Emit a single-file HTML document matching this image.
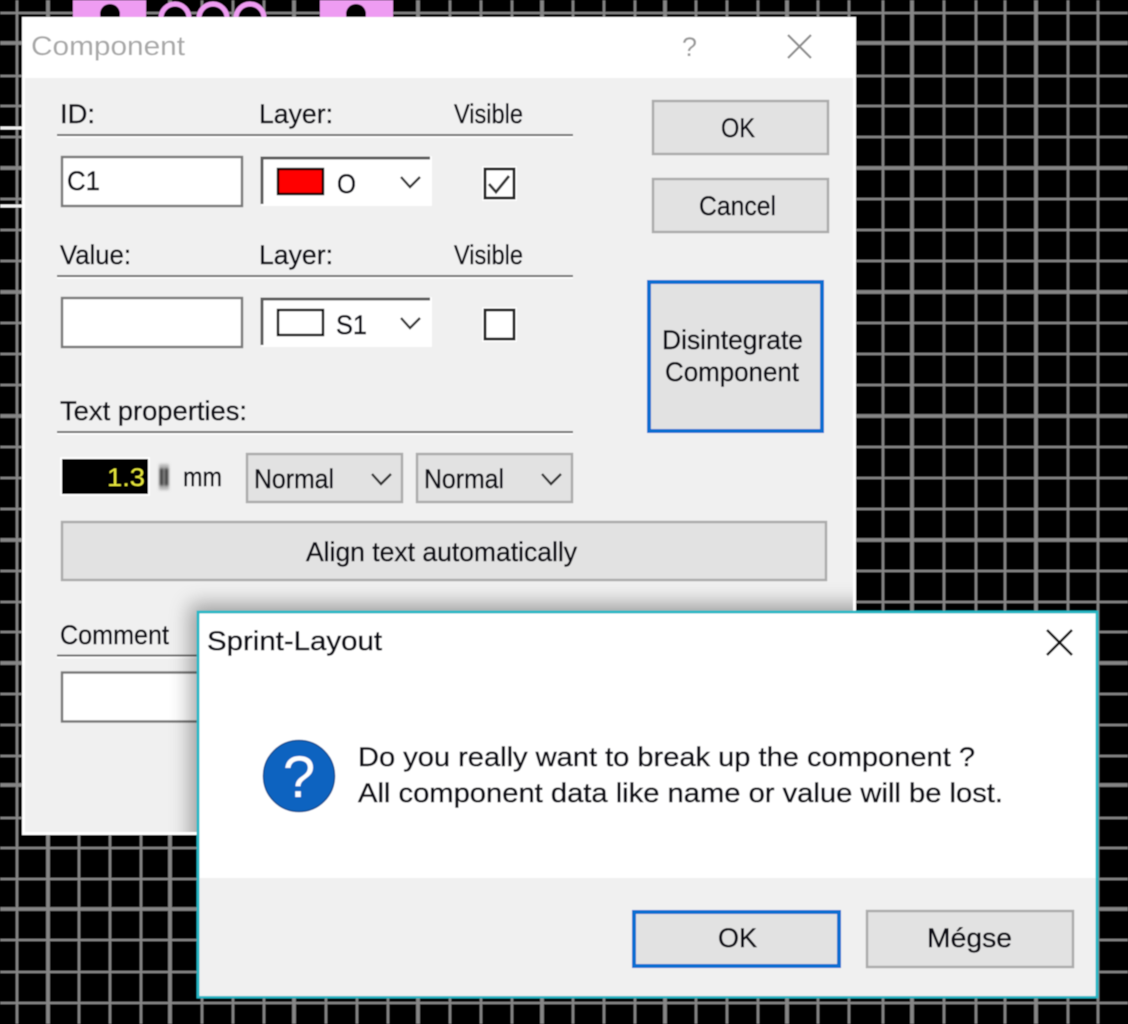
<!DOCTYPE html>
<html><head><meta charset="utf-8"><style>
html,body{margin:0;padding:0;background:#000;width:1128px;height:1024px;overflow:hidden}
svg{display:block}
text{font-family:"Liberation Sans",sans-serif;font-size:27px;fill:#101018;stroke:#101018;stroke-width:.45px}
</style></head><body>
<svg width="1128" height="1024" viewBox="0 0 1128 1024" xmlns="http://www.w3.org/2000/svg">
<defs>
<filter id="b" x="0" y="0" width="100%" height="100%"><feGaussianBlur stdDeviation="0.55"/></filter>
<filter id="s" x="-20%" y="-20%" width="140%" height="140%"><feGaussianBlur stdDeviation="10"/></filter>
<filter id="sp" x="-50%" y="-50%" width="200%" height="200%"><feGaussianBlur stdDeviation="1.2"/></filter>
<clipPath id="cd"><rect x="25" y="78" width="828" height="754"/></clipPath>
</defs>
<g filter="url(#b)">
<rect width="1128" height="1024" fill="#000"/>
<path stroke="#858585" stroke-width="2.6" fill="none" d="M17 0V1024M79 0V1024M110 0V1024M141 0V1024M202 0V1024M233 0V1024M264 0V1024M326 0V1024M357 0V1024M388 0V1024M450 0V1024M481 0V1024M512 0V1024M573 0V1024M604 0V1024M635 0V1024M696 0V1024M727 0V1024M758 0V1024M818 0V1024M849 0V1024M883 0V1024M944 0V1024M976 0V1024M1005 0V1024M1068 0V1024M1098 0V1024M0 13H1128M0 76H1128M0 106H1128M0 137H1128M0 199H1128M0 230H1128M0 261H1128M0 323H1128M0 354H1128M0 385H1128M0 447H1128M0 478H1128M0 509H1128M0 571H1128M0 602H1128M0 632H1128M0 694H1128M0 725H1128M0 756H1128M0 818H1128M0 848H1128M0 879H1128M0 940H1128M0 972H1128M0 1003H1128"/>
<path stroke="#858585" stroke-width="3.8" fill="none" d="M48 0V1024M170 0V1024M294 0V1024M418 0V1024M542 0V1024M665 0V1024M787 0V1024M912 0V1024M1036 0V1024M0 43H1128M0 168H1128M0 292H1128M0 416H1128M0 540H1128M0 663H1128M0 785H1128M0 909H1128"/>
<path stroke="#f2f2f2" stroke-width="3" d="M0 128H24M0 206H24"/>
<!-- pads -->
<rect x="73" y="0" width="73" height="18" fill="#ee9cf2"/>
<rect x="320" y="0" width="73" height="18" fill="#ee9cf2"/>
<circle cx="110" cy="14" r="10" fill="#000"/><circle cx="356" cy="14" r="10" fill="#000"/>
<g fill="#000" stroke="#ee9cf2" stroke-width="5"><circle cx="175" cy="18" r="14"/><circle cx="213" cy="18" r="14"/><circle cx="250" cy="18" r="14"/></g>

<!-- Component dialog -->
<rect x="22" y="17" width="834" height="818" fill="#fff"/>
<rect x="25" y="78" width="828" height="754" fill="#f0f0f0"/>
<text x="31" y="55" textLength="154" lengthAdjust="spacingAndGlyphs" style="fill:#a8a8a8;stroke:none">Component</text>
<text x="682" y="56" textLength="15" lengthAdjust="spacingAndGlyphs" style="fill:#999;stroke:none">?</text>
<path d="M788 35L811 58M811 35L788 58" stroke="#8c8c8c" stroke-width="2.2" fill="none"/>

<text x="60" y="123" textLength="35" lengthAdjust="spacingAndGlyphs">ID:</text>
<text x="259" y="123" textLength="74" lengthAdjust="spacingAndGlyphs">Layer:</text>
<text x="454" y="123" textLength="69" lengthAdjust="spacingAndGlyphs">Visible</text>
<path d="M57 135H573" stroke="#707070" stroke-width="2"/><path d="M57 137H573" stroke="#fff" stroke-width="1.5"/>
<rect x="62" y="157" width="180" height="49" fill="#fff" stroke="#777" stroke-width="2.4"/>
<text x="67" y="190" textLength="33" lengthAdjust="spacingAndGlyphs">C1</text>
<rect x="261" y="156" width="171" height="50" fill="#fff"/>
<path d="M262 204V158H430" stroke="#5c5c5c" stroke-width="3" fill="none"/>
<rect x="278" y="169" width="45" height="25" fill="#f00" stroke="#000" stroke-width="2.4"/>
<text x="337" y="193" textLength="19" lengthAdjust="spacingAndGlyphs">O</text>
<path d="M401 177L410 187L420 177" stroke="#333" stroke-width="2.4" fill="none"/>
<rect x="482" y="166" width="35" height="35" fill="#fff"/>
<rect x="485" y="169" width="29" height="29" fill="#fff" stroke="#222" stroke-width="2.8"/>
<path d="M489 184L496 192L509 176" stroke="#333" stroke-width="2.8" fill="none"/>

<text x="60" y="264" textLength="71" lengthAdjust="spacingAndGlyphs">Value:</text>
<text x="259" y="264" textLength="74" lengthAdjust="spacingAndGlyphs">Layer:</text>
<text x="454" y="264" textLength="69" lengthAdjust="spacingAndGlyphs">Visible</text>
<path d="M57 276H573" stroke="#707070" stroke-width="2"/><path d="M57 278H573" stroke="#fff" stroke-width="1.5"/>
<rect x="62" y="298" width="180" height="49" fill="#fff" stroke="#777" stroke-width="2.4"/>
<rect x="261" y="297" width="171" height="50" fill="#fff"/>
<path d="M262 345V299H430" stroke="#5c5c5c" stroke-width="3" fill="none"/>
<rect x="278" y="310" width="45" height="25" fill="#fff" stroke="#000" stroke-width="2.4"/>
<text x="336" y="334" textLength="31" lengthAdjust="spacingAndGlyphs">S1</text>
<path d="M401 318L410 328L420 318" stroke="#333" stroke-width="2.4" fill="none"/>
<rect x="482" y="307" width="35" height="35" fill="#fff"/>
<rect x="485" y="310" width="29" height="29" fill="#fff" stroke="#222" stroke-width="2.8"/>

<text x="60" y="420" textLength="187" lengthAdjust="spacingAndGlyphs">Text properties:</text>
<path d="M57 432H573" stroke="#707070" stroke-width="2"/><path d="M57 434H573" stroke="#fff" stroke-width="1.5"/>
<rect x="60" y="457" width="90" height="39" fill="#fff"/>
<rect x="62" y="459" width="86" height="35" fill="#000"/>
<text x="107" y="486" textLength="38" lengthAdjust="spacingAndGlyphs" style="fill:#e8e83c;stroke:none;font-size:25px">1.3</text>
<g filter="url(#sp)"><rect x="159" y="464" width="10" height="26" fill="#b8b8b8"/>
<path d="M161.500 468V486M166.500 468V486" stroke="#000" stroke-width="3.400"/></g>
<text x="183" y="486" textLength="39" lengthAdjust="spacingAndGlyphs">mm</text>

<rect x="247" y="454" width="155" height="48" fill="#e2e2e2" stroke="#aaa" stroke-width="2.4"/>
<text x="254" y="488" textLength="80" lengthAdjust="spacingAndGlyphs">Normal</text>
<path d="M372 474L381 484L391 474" stroke="#333" stroke-width="2.4" fill="none"/>
<rect x="417" y="454" width="155" height="48" fill="#e2e2e2" stroke="#aaa" stroke-width="2.4"/>
<text x="424" y="488" textLength="80" lengthAdjust="spacingAndGlyphs">Normal</text>
<path d="M542 474L551 484L561 474" stroke="#333" stroke-width="2.4" fill="none"/>

<rect x="62" y="522" width="764" height="58" fill="#e2e2e2" stroke="#aaa" stroke-width="2.4"/>
<text x="306" y="561" textLength="271" lengthAdjust="spacingAndGlyphs">Align text automatically</text>

<text x="60" y="644" textLength="109" lengthAdjust="spacingAndGlyphs">Comment</text>
<path d="M57 655.500H200" stroke="#707070" stroke-width="2"/><path d="M57 657.500H200" stroke="#fff" stroke-width="1.500"/>
<rect x="62" y="672.500" width="200" height="49" fill="#fff" stroke="#777" stroke-width="2.400"/>

<rect x="653" y="101" width="175" height="53" fill="#e2e2e2" stroke="#aaa" stroke-width="2.4"/>
<text x="721" y="137" textLength="34" lengthAdjust="spacingAndGlyphs">OK</text>
<rect x="653" y="179" width="175" height="53" fill="#e2e2e2" stroke="#aaa" stroke-width="2.4"/>
<text x="699" y="215" textLength="77" lengthAdjust="spacingAndGlyphs">Cancel</text>
<rect x="649" y="282" width="173" height="149" fill="#e2e2e2" stroke="#0a6ed1" stroke-width="4"/>
<text x="662" y="349" textLength="141" lengthAdjust="spacingAndGlyphs">Disintegrate</text>
<text x="665" y="381" textLength="134" lengthAdjust="spacingAndGlyphs">Component</text>

<!-- shadow -->
<g clip-path="url(#cd)"><rect x="190" y="604" width="914" height="400" fill="#000" opacity=".34" filter="url(#s)"/></g>

<!-- Sprint dialog -->
<rect x="198" y="612" width="899" height="385" fill="#fff" stroke="#28b8c6" stroke-width="2.8"/>
<rect x="199.500" y="878" width="896" height="118" fill="#f0f0f0"/>
<text x="207" y="650" textLength="175" lengthAdjust="spacingAndGlyphs">Sprint-Layout</text>
<path d="M1047 630L1072 655M1072 630L1047 655" stroke="#111" stroke-width="2.600" fill="none"/>
<circle cx="299" cy="776" r="35.500" fill="#0a64c0" stroke="#0c4f96" stroke-width="1.500"/>
<text x="299" y="797" text-anchor="middle" style="fill:#fff;stroke:none;font-size:58px">?</text>
<text x="358" y="766" textLength="617" lengthAdjust="spacingAndGlyphs">Do you really want to break up the component ?</text>
<text x="358" y="802" textLength="645" lengthAdjust="spacingAndGlyphs">All component data like name or value will be lost.</text>
<rect x="634" y="912" width="205" height="54" fill="#e2e2e2" stroke="#0a6ed1" stroke-width="4"/>
<text x="718" y="947" textLength="39" lengthAdjust="spacingAndGlyphs">OK</text>
<rect x="867" y="911" width="206" height="56" fill="#e2e2e2" stroke="#aaa" stroke-width="2.400"/>
<text x="927" y="947" textLength="85" lengthAdjust="spacingAndGlyphs">Mégse</text>
</g>
</svg>
</body></html>
